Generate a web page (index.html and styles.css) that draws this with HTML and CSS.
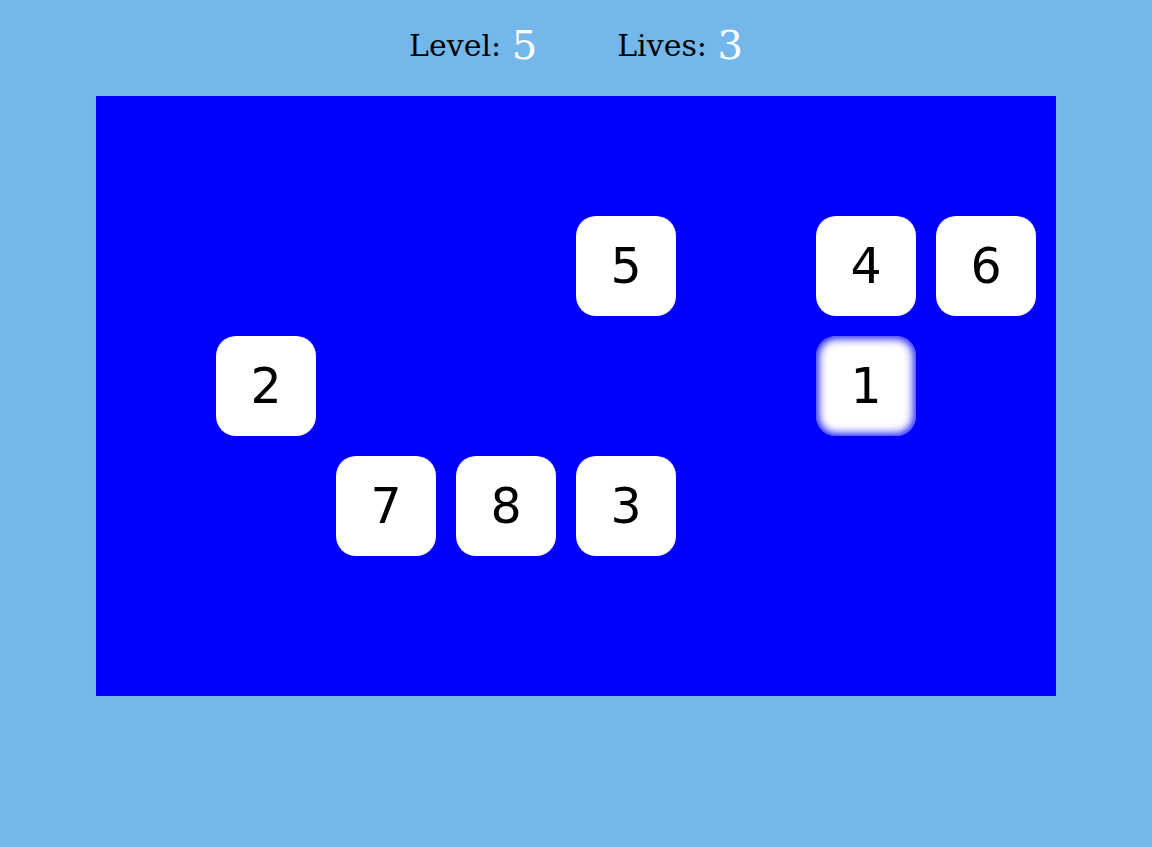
FILE: index.html
```html
<!DOCTYPE html>
<html>
<head>
<meta charset="utf-8">
<link rel="stylesheet" href="styles.css">
</head>
<body>
<header class="stats">
  <div class="stat"><span class="label">Level:</span> <span class="value">5</span></div>
  <div class="stat"><span class="label">Lives:</span> <span class="value">3</span></div>
</header>
<main class="board">
  <div class="tile c4 r1">5</div>
  <div class="tile c6 r1">4</div>
  <div class="tile c7 r1">6</div>
  <div class="tile c1 r2">2</div>
  <div class="tile c6 r2 active">1</div>
  <div class="tile c2 r3">7</div>
  <div class="tile c3 r3">8</div>
  <div class="tile c4 r3">3</div>
</main>
</body>
</html>
```
FILE: styles.css
```css
html, body {
  margin: 0;
  padding: 0;
}
body {
  background: #74b8eb;
  width: 1152px;
  height: 847px;
  overflow: hidden;
}
.stats {
  height: 96px;
  display: flex;
  justify-content: center;
  align-items: flex-start;
  gap: 80px;
  font-family: "DejaVu Serif", serif;
  box-sizing: border-box;
  padding-top: 25px;
}
.stat {
  font-size: 30px;
  line-height: 40px;
  white-space: nowrap;
}
.label {
  color: #000;
}
.value {
  font-size: 40px;
  color: #fff;
  vertical-align: -3px;
  margin-left: 1px;
}
.board {
  margin-left: 96px;
  width: 960px;
  height: 600px;
  box-sizing: border-box;
  background: #0000ff;
  display: grid;
  grid-template-columns: repeat(8, 100px);
  grid-template-rows: repeat(5, 100px);
  gap: 20px;
  padding: 0 20px 20px 0;
}
.tile {
  background: #fff;
  border-radius: 20px;
  display: flex;
  align-items: center;
  justify-content: center;
  font-family: "DejaVu Sans", sans-serif;
  font-size: 49px;
  color: #000;
}
.tile.active {
  box-shadow: inset 0 0 10px 2px #0000ff;
}
.c1 { grid-column: 2; }
.c2 { grid-column: 3; }
.c3 { grid-column: 4; }
.c4 { grid-column: 5; }
.c6 { grid-column: 7; }
.c7 { grid-column: 8; }
.r1 { grid-row: 2; }
.r2 { grid-row: 3; }
.r3 { grid-row: 4; }
```
